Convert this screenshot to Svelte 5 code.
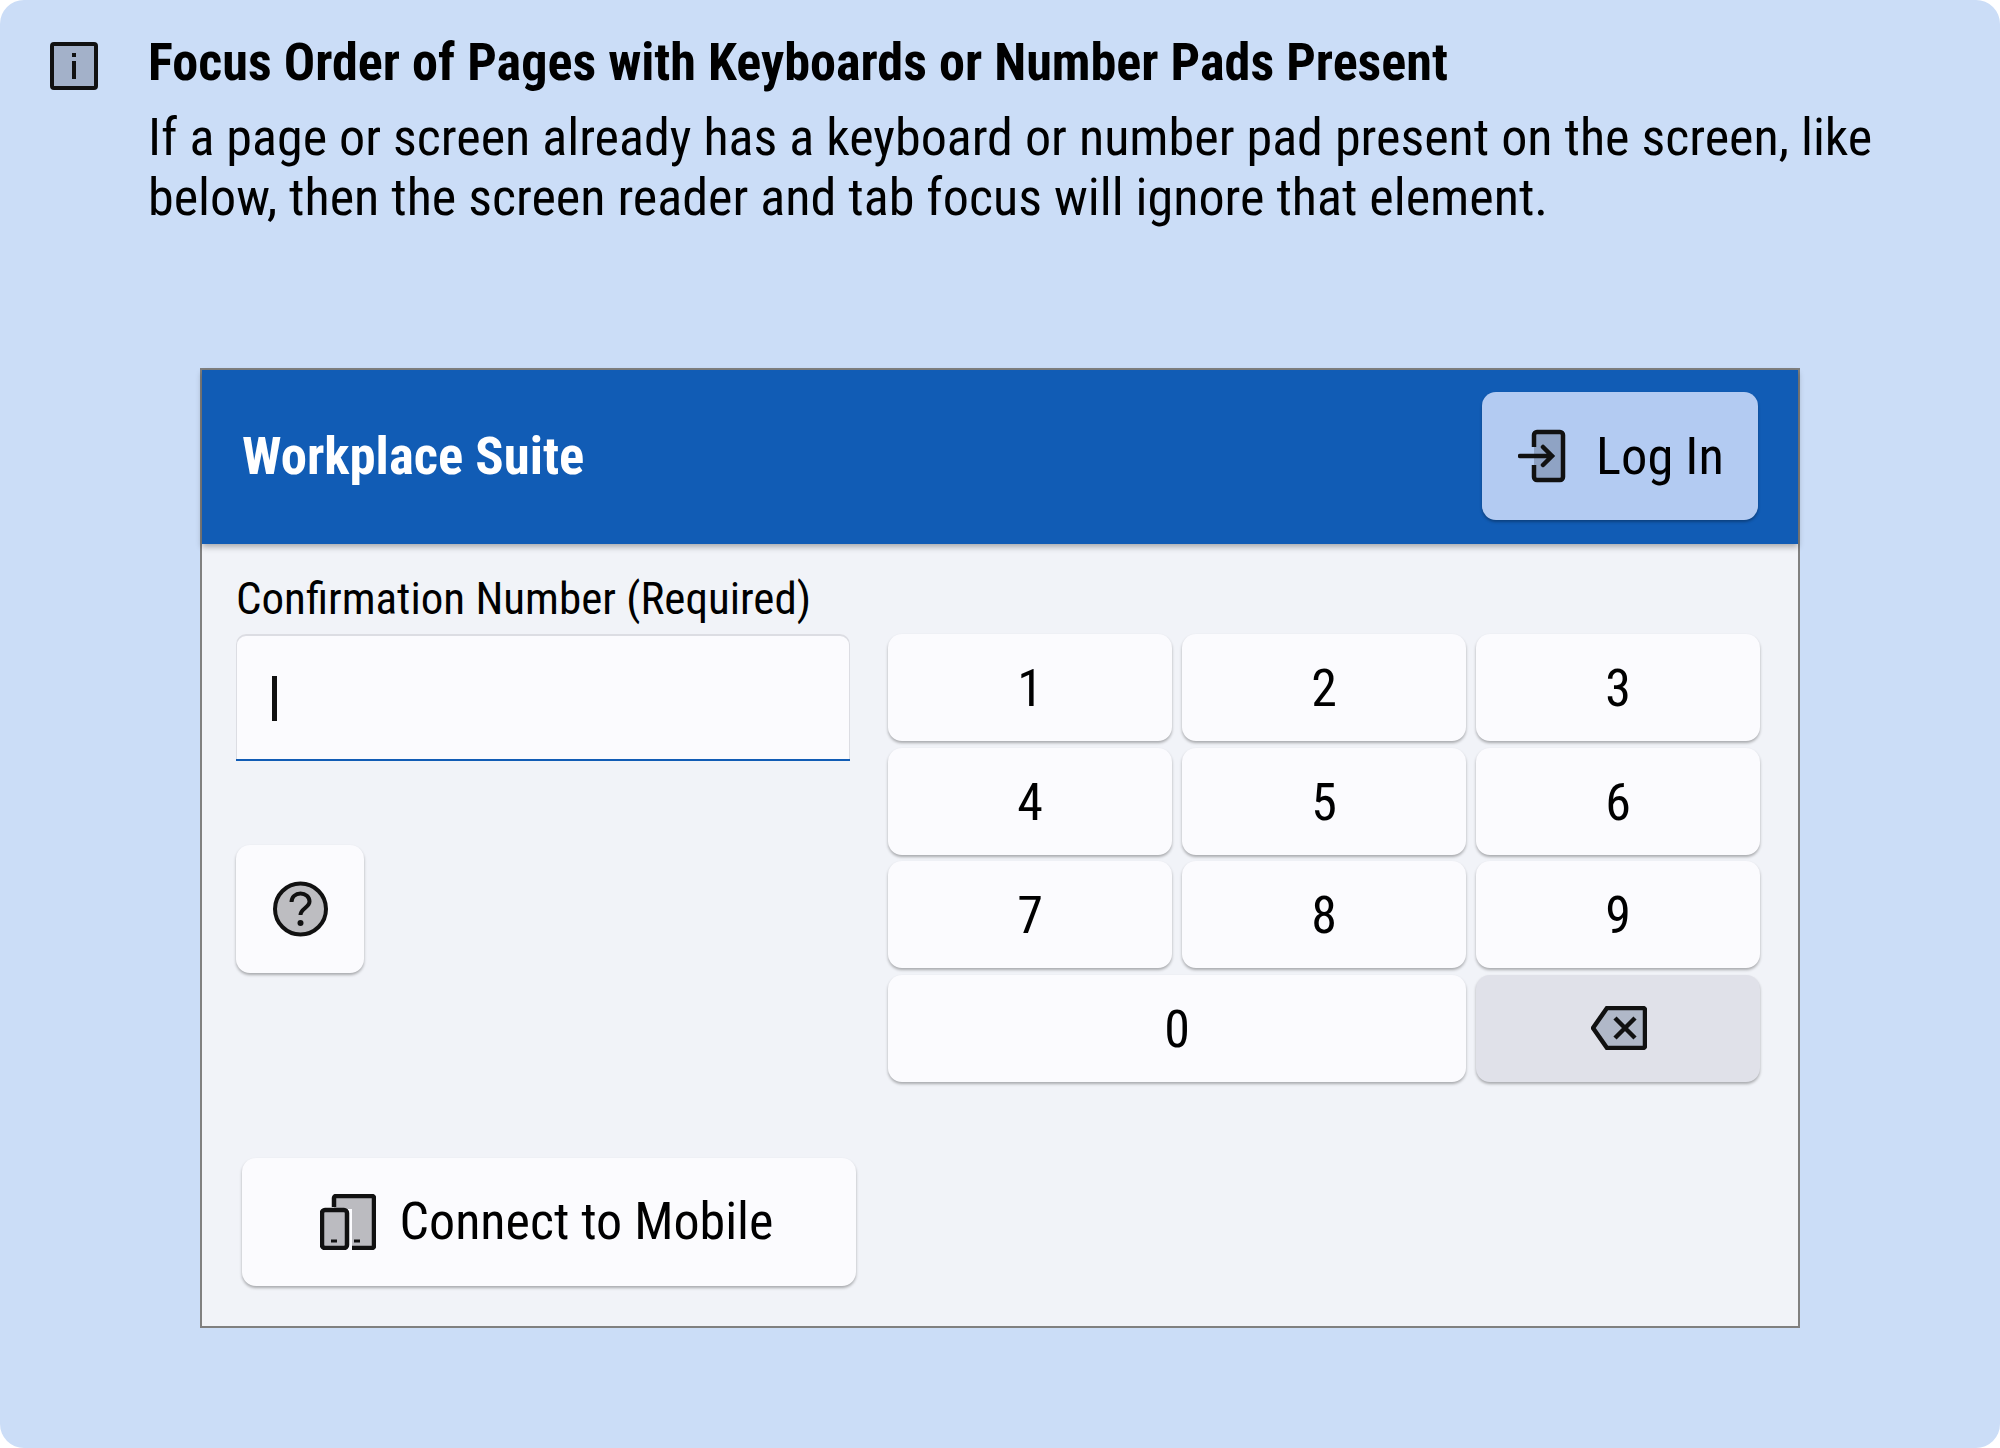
<script>
	const keys = ['1', '2', '3', '4', '5', '6', '7', '8', '9'];
</script>

<div class="panel">
	<div class="note">
		<svg class="info" viewBox="0 0 48 48" width="48" height="48">
			<rect x="2" y="2" width="44" height="44" rx="2" fill="#a3b1c9" stroke="#111" stroke-width="4" />
			<rect x="22" y="11" width="4" height="4" fill="#111" />
			<rect x="22" y="19" width="4" height="18" fill="#111" />
		</svg>
		<div class="note-text">
			<h1>Focus Order of Pages with Keyboards or Number Pads Present</h1>
			<p>If a page or screen already has a keyboard or number pad present on the screen, like below, then the screen reader and tab focus will ignore that element.</p>
		</div>
	</div>

	<div class="card">
		<header>
			<span class="brand">Workplace Suite</span>
			<button class="login">
				<svg viewBox="0 0 50 54" width="50" height="54">
					<path d="M16 3h26a3 3 0 0 1 3 3v42a3 3 0 0 1-3 3H16V37h0V3z" fill="#8fa3c4" />
					<path d="M16 18V6a3 3 0 0 1 3-3h23a3 3 0 0 1 3 3v42a3 3 0 0 1-3 3H19a3 3 0 0 1-3-3V36" fill="none" stroke="#111" stroke-width="4.500" />
					<path d="M2 27h32M25 18l9 9-9 9" fill="none" stroke="#111" stroke-width="4.500" stroke-linecap="round" />
				</svg>
				<span>Log In</span>
			</button>
		</header>
		<div class="body">
			<div class="label">Confirmation Number (Required)</div>
			<div class="form">
				<div class="left">
					<div class="input"><span class="caret"></span></div>
					<button class="help" aria-label="Help">
						<svg viewBox="0 0 56 56" width="56" height="56">
							<circle cx="28.500" cy="28" r="25.500" fill="#bdbdc1" stroke="#111" stroke-width="4" />
							<path d="M19.500 21c0-5 4-8.500 9-8.500s9 3.500 9 8c0 6-9 7-9 13.500" fill="none" stroke="#111" stroke-width="4" />
							<circle cx="28.500" cy="42" r="3" fill="#111" />
						</svg>
					</button>
				</div>
				<div class="keypad">
					{#each keys as key}
						<button class="key">{key}</button>
					{/each}
					<button class="key zero">0</button>
					<button class="key back" aria-label="Backspace">
						<svg viewBox="0 0 56 44" width="56" height="44">
							<path d="M16 2h36a2 2 0 0 1 2 2v36a2 2 0 0 1-2 2H16L2 22z" fill="#b0b8c8" stroke="#111" stroke-width="4.500" stroke-linejoin="round" />
							<path d="M24 12l20 20M44 12L24 32" fill="none" stroke="#111" stroke-width="4.500" />
						</svg>
					</button>
				</div>
			</div>
			<button class="connect">
				<svg viewBox="0 0 56 56" width="56" height="56">
					<path d="M14 2h38a2 2 0 0 1 2 2v48a2 2 0 0 1-2 2H32V15H14z" fill="#bbbbc0" />
					<path d="M14 13V4a2 2 0 0 1 2-2h36a2 2 0 0 1 2 2v48a2 2 0 0 1-2 2H32" fill="none" stroke="#111" stroke-width="4.500" />
					<rect x="2" y="16" width="25" height="38" rx="3" fill="#bbbbc0" stroke="#111" stroke-width="4.500" />
					<path d="M11 47h6M34 47h6" stroke="#111" stroke-width="3" />
				</svg>
				<span>Connect to Mobile</span>
			</button>
		</div>
	</div>
</div>

<style>
	:global(body) {
		background: #fff;
	}

	.panel {
		box-sizing: border-box;
		width: 2000px;
		height: 1448px;
		padding: 38px 0 0 50px;
		background: #cbddf7;
		border-radius: 24px;
		font-family: Roboto, 'Liberation Sans', sans-serif;
		font-stretch: 75%;
		font-weight: 450;
		color: #000;
	}

	.note {
		display: flex;
		gap: 50px;
	}

	.info {
		flex: none;
		margin-top: 4px;
	}

	.note-text {
		width: 1750px;
	}

	h1 {
		margin: 0 0 20px;
		font-size: 52.200px;
		line-height: 50px;
		font-weight: 700;
	}

	p {
		margin: 0;
		font-size: 52.100px;
		line-height: 60px;
	}

	.card {
		box-sizing: border-box;
		width: 1600px;
		height: 960px;
		margin: 140px 0 0 150px;
		background: #f1f3f8;
		border: 2px solid #808080;
	}

	header {
		box-sizing: border-box;
		display: flex;
		align-items: center;
		justify-content: space-between;
		height: 174px;
		padding: 0 40px 2px;
		background: #115cb5;
		box-shadow: 0 3px 6px rgba(0, 0, 0, 0.3);
	}

	.brand {
		color: #fff;
		font-size: 52.700px;
		font-weight: 700;
	}

	button {
		border: none;
		padding: 0;
		font: inherit;
		color: inherit;
		background: #fbfbfe;
		border-radius: 14px;
		box-shadow: 0 2px 3px rgba(0, 0, 0, 0.3);
		display: flex;
		align-items: center;
		justify-content: center;
	}

	.login {
		width: 276px;
		height: 128px;
		padding-left: 2px;
		gap: 28px;
		font-size: 52.500px;
		background: #b3cbf2;
	}

	.body {
		padding: 0 38px 0 34px;
	}

	.label {
		margin-top: 29px;
		height: 61px;
		font-size: 45px;
		line-height: 52px;
	}

	.form {
		display: flex;
		justify-content: space-between;
	}

	.left {
		width: 614px;
	}

	.input {
		box-sizing: border-box;
		height: 127px;
		padding: 42px 0 0 36px;
		background: #fbfbfe;
		border-radius: 10px 10px 0 0;
		box-shadow: inset 0 1px 0 1px #dcdde3;
		border-bottom: 2px solid #115cb5;
	}

	.caret {
		display: block;
		width: 5px;
		height: 45px;
		background: #111;
	}

	.help {
		width: 128px;
		height: 128px;
		margin-top: 84px;
	}

	.keypad {
		display: grid;
		grid-template-columns: repeat(3, 284px);
		grid-auto-rows: 107.200px;
		gap: 6.400px 10px;
	}

	.key {
		padding-top: 2px;
		font-size: 52px;
	}

	.zero {
		grid-column: span 2;
	}

	.back {
		padding: 0 0 0 2px;
		background: #e0e1e9;
	}

	.connect {
		width: 614px;
		height: 128px;
		margin: 76px 0 0 6px;
		padding-right: 5px;
		gap: 24px;
		font-size: 52px;
	}
</style>
